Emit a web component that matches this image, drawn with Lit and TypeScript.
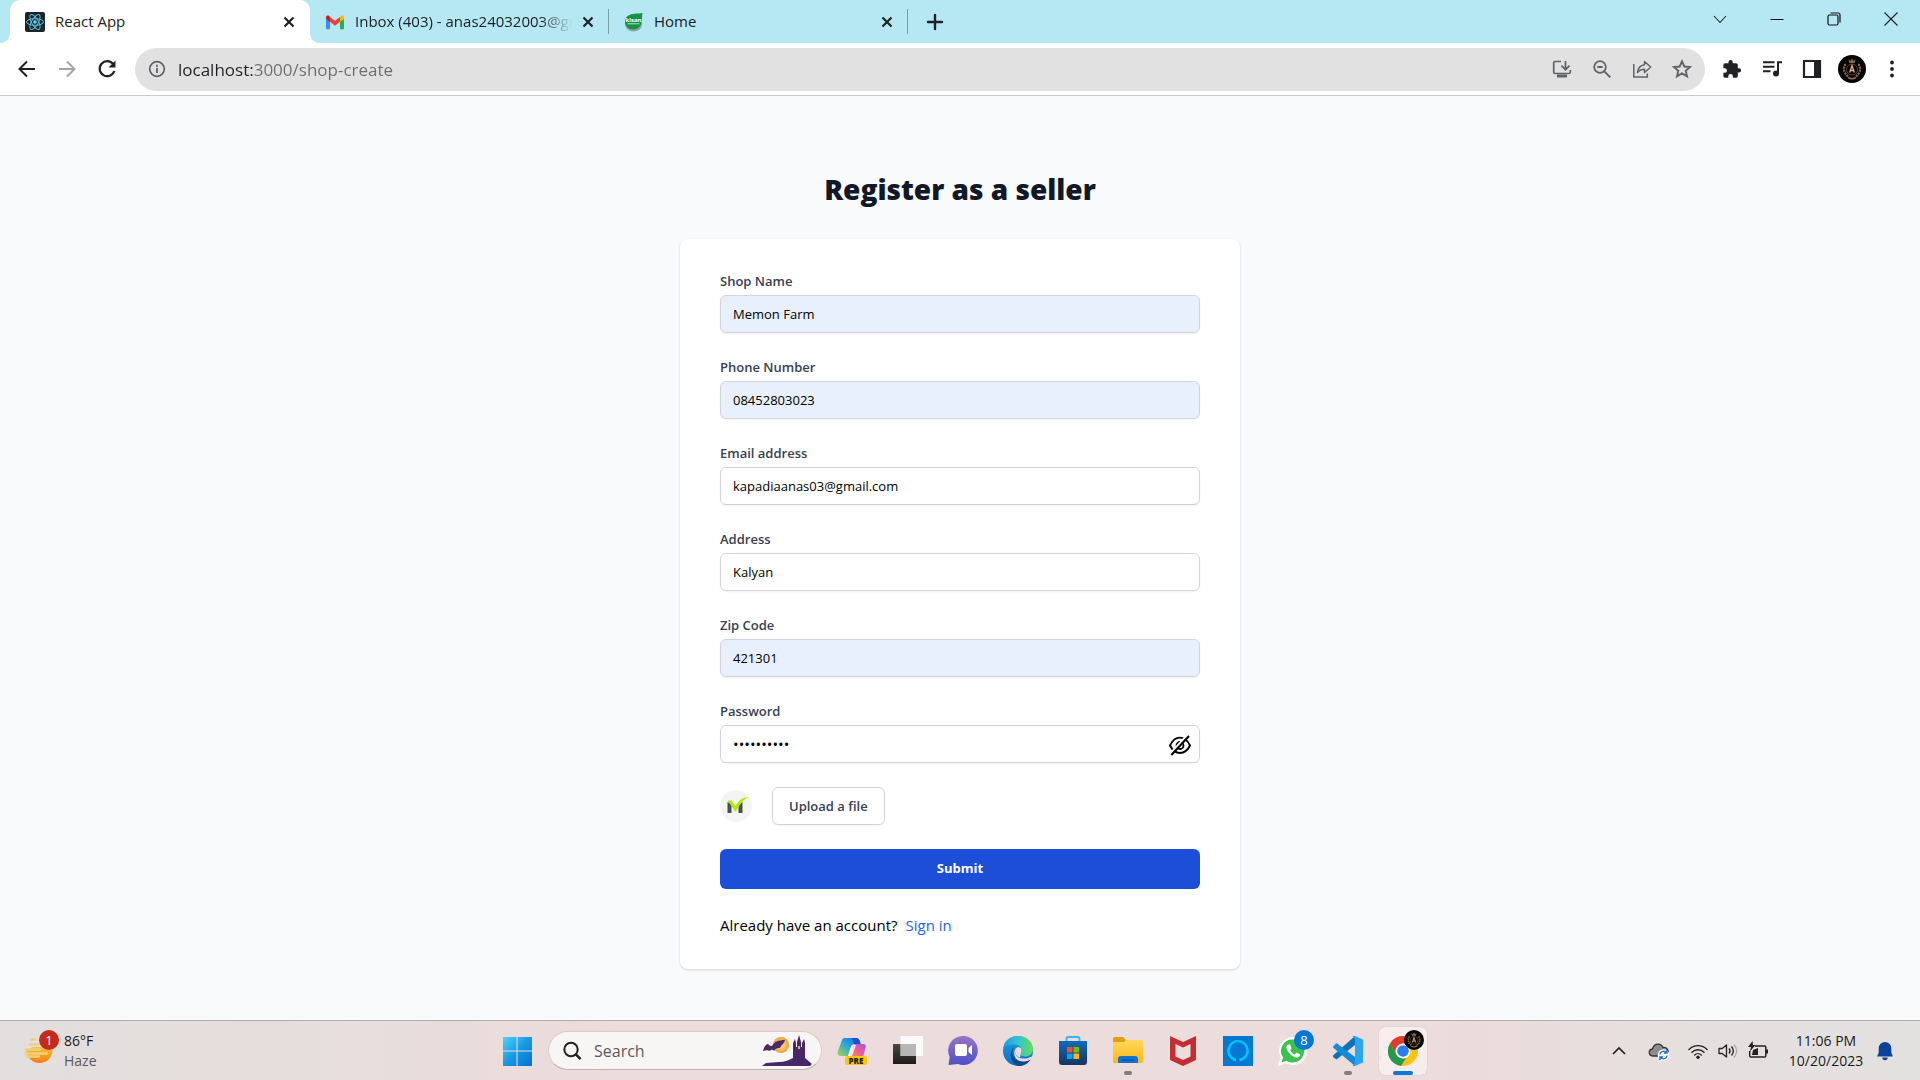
import { LitElement, html, css, svg, nothing } from "lit";
import { customElement, state } from "lit/decorators.js";

const icon = (w: number, h: number, body: unknown, box = `0 0 ${w} ${h}`) =>
  html`<svg width=${w} height=${h} viewBox=${box} fill="none" aria-hidden="true">${body}</svg>`;

const closeIcon = icon(12, 12, svg`<path d="M1.5 1.5l9 9M10.5 1.5l-9 9" stroke="#202124" stroke-width="2.2"/>`);

const crest = (size: number) =>
  icon(size, size, svg`
    <circle cx="14" cy="14" r="14" fill="#050404"/>
    <path d="M10.5 4l2 2L14 3.500 15.500 6l2-2-.8 4h-5.400z" fill="#8a6746"/>
    <circle cx="14" cy="14.500" r="5.500" stroke="#5c4630" stroke-width="1"/>
    <path d="M7.500 9c-3 5-1.500 10 3.500 13M20.500 9c3 5 1.500 10-3.500 13" stroke="#8f6d4c" stroke-width="2.200" stroke-dasharray="2 1"/>
    <path d="M10 22.500c2.500 1.500 5.500 1.500 8 0" stroke="#8f6d4c" stroke-width="1.500"/>
    <path d="M11.700 17.500l2.300-7 2.300 7M12.700 15.500h2.600" stroke="#d9b48a" stroke-width="1.300"/>`,
    "0 0 28 28");

const reactIcon = icon(20, 20, svg`
  <rect width="20" height="20" rx="2" fill="#20232a"/>
  <g stroke="#53c1de" stroke-width="1"><ellipse cx="10" cy="10" rx="8.500" ry="3.300"/>
  <ellipse cx="10" cy="10" rx="8.500" ry="3.300" transform="rotate(60 10 10)"/>
  <ellipse cx="10" cy="10" rx="8.500" ry="3.300" transform="rotate(120 10 10)"/></g>
  <circle cx="10" cy="10" r="1.800" fill="#61dafb"/>`);

const gmailIcon = icon(20, 20, svg`
  <path d="M1 6v10c0 .8.500 1.300 1.300 1.300H5V9z" fill="#4285f4"/>
  <path d="M15 9v8.300h2.700c.8 0 1.300-.5 1.300-1.300V6z" fill="#34a853"/>
  <path d="M15 5.500V10l4-3V5.500C19 3.600 17 3.200 15.800 4z" fill="#fbbc04"/>
  <path d="M5 5l5 3.800L15 5v4.800l-5 3.900-5-3.900z" fill="#ea4335"/>
  <path d="M1 5.500V7l4 3V5l-.8-1C3 3.200 1 3.600 1 5.500z" fill="#c5221f"/>`);

const kisanIcon = icon(20, 20, svg`
  <path d="M1 11c0 4.500 3 8.500 8.500 8.500 6 0 9-4 8.500-9z" fill="#8fa39d"/>
  <path d="M18.500 1c-.5 2-.3 4.500-.7 8-.6 5-4 8.500-8.500 8.500S1 14 1 10c0-6 5-8 9.500-8.300C14 1.500 16 1.400 18.500 1z" fill="#159347"/>
  <text x="9.500" y="10" text-anchor="middle" font-size="6" font-weight="700" fill="#fff" font-family="Open Sans, sans-serif">kisan</text>
  <path d="M3.500 11.800h12" stroke="#b9dfc8" stroke-width="1"/>`);

const backIcon = icon(20, 20, svg`<path d="M18 10H3M10 2.500L2.500 10l7.500 7.500" stroke="#202124" stroke-width="2"/>`);
const forwardIcon = icon(20, 20, svg`<path d="M2 10h15M10 2.500l7.500 7.500-7.500 7.500" stroke="#a3a3a3" stroke-width="2"/>`);
const reloadIcon = icon(20, 20, svg`
  <path d="M16.200 5.200A7.500 7.500 0 1 0 17.300 12" stroke="#202124" stroke-width="2.200"/>
  <path d="M18.500 1.500v7h-7z" fill="#202124"/>`);
const infoIcon = icon(18, 18, svg`
  <circle cx="9" cy="9" r="7.300" stroke="#5f6368" stroke-width="1.700"/>
  <path d="M9 8v5M9 4.800v1.900" stroke="#5f6368" stroke-width="1.800"/>`);

const installIcon = icon(20, 20, svg`
  <path d="M9 2.500H3c-.8 0-1.300.5-1.300 1.300v9.400c0 .8.500 1.300 1.300 1.300h14c.8 0 1.300-.5 1.300-1.300V11" stroke="#5f6368" stroke-width="1.700"/>
  <path d="M5 15.500h10v3H5z" fill="#5f6368"/><path d="M13.500 2v8M9.500 6.700l4 4 4-4" stroke="#5f6368" stroke-width="1.700"/>`);
const zoomOutIcon = icon(20, 20, svg`
  <circle cx="8" cy="8" r="5.800" stroke="#5f6368" stroke-width="1.800"/>
  <path d="M12.300 12.300l6 6M5.300 8h5.400" stroke="#5f6368" stroke-width="1.900"/>`);
const shareIcon = icon(20, 20, svg`
  <path d="M1.800 5v13h13.500v-3.500" stroke="#5f6368" stroke-width="1.500"/>
  <path d="M12.500 2.500l6.200 5.500-6.200 5.500v-3.200c-3.300 0-5.300.9-7 3.200.4-3.800 2.300-7 7-7.700z" stroke="#5f6368" stroke-width="1.500" stroke-linejoin="round"/>`);
const starIcon = icon(20, 20, svg`
  <path d="M10 2.300l2.300 5.200 5.700.5-4.300 3.800 1.300 5.600-5-3-5 3 1.300-5.600L2 8l5.700-.5z" stroke="#5f6368" stroke-width="1.900"/>`);

const puzzleIcon = icon(20, 20, svg`
  <path d="M17 9.300h-1.200V6c0-1-.8-1.700-1.700-1.700h-3.400V3a2.100 2.100 0 0 0-4.200 0v1.300H3.100C2.100 4.300 1.400 5 1.400 6v3.200h1.300a2.300 2.300 0 0 1 0 4.600H1.400V17c0 1 .7 1.700 1.700 1.700h3.200v-1.300a2.300 2.300 0 0 1 4.600 0v1.300h3.200c1 0 1.700-.7 1.700-1.700v-3.500H17a2.100 2.100 0 0 0 0-4.200z" fill="#202124"/>`);
const musicIcon = icon(20, 20, svg`
  <path d="M1 3.200h11.500M1 7.700h11.500M1 12.200h7.500" stroke="#202124" stroke-width="1.900"/>
  <path d="M16 14V3.200h4" stroke="#202124" stroke-width="2"/><circle cx="14" cy="14.500" r="3" fill="#202124"/>`);
const panelIcon = icon(20, 20, svg`
  <path d="M2 2h16v16H2z" stroke="#202124" stroke-width="2.200"/><path d="M12 2h6v16h-6z" fill="#202124"/>`);
const dotsIcon = icon(20, 20, svg`<g fill="#202124"><circle cx="10" cy="3.500" r="1.900"/><circle cx="10" cy="10" r="1.900"/><circle cx="10" cy="16.500" r="1.900"/></g>`);

const eyeOffIcon = icon(24, 24, svg`
  <path d="M2 12.500c5-10.500 15-10.500 20 0-5 10-15 10-20 0z" stroke="#000" stroke-width="1.900"/>
  <circle cx="12" cy="12.500" r="3.500" stroke="#000" stroke-width="1.800"/>
  <path d="M2 21L20 1" stroke="#fff" stroke-width="2"/>
  <path d="M3.300 22L21 3" stroke="#000" stroke-width="2"/>`);
const shopLogo = icon(32, 32, svg`
  <circle cx="16" cy="16" r="16" fill="#f4f4f4"/>
  <path d="M7.500 12l4 2v9h-4zM18.500 15l4-3v11h-4z" fill="#4b4b50"/>
  <path d="M7.500 10.500h4l4 5.500c3-5.500 7-9 13.500-9-6 2.500-9 7.500-13.500 15z" fill="#b0e80c"/>`);

const weatherIcon = icon(30, 30, svg`
  <defs><linearGradient id="sun" x1="0" y1="0" x2="0" y2="1"><stop offset="0" stop-color="#fbc02d"/><stop offset="1" stop-color="#f57c13"/></linearGradient></defs>
  <path d="M2.500 14a13 13 0 0 0 26 0l-8-3H9z" fill="url(#sun)"/>
  <path d="M7 3.500h4M6 8.500h8M2 13.500h14M1 17.500h22M3 20.500h12" stroke="#f1cf7d" stroke-width="2.600" stroke-linecap="round"/>`);
const startIcon = icon(30, 30, svg`
  <defs><linearGradient id="win" x1="0" y1="0" x2="1" y2="1"><stop offset="0" stop-color="#4cd3fc"/><stop offset=".5" stop-color="#1798e2"/><stop offset="1" stop-color="#0672d0"/></linearGradient></defs>
  <path d="M1 1h13.500v13.500H1zM15.500 1H30v13.500H15.500zM1 15.500h13.500V30H1zM15.500 15.500H30V30H15.500z" fill="url(#win)"/>`);
const searchIcon = icon(20, 20, svg`
  <circle cx="9" cy="8.500" r="6.700" stroke="#222" stroke-width="2"/><path d="M13.600 13.200l5 5" stroke="#222" stroke-width="2.600"/>`);
const castleIcon = icon(52, 34, svg`
  <defs><radialGradient id="moon"><stop offset="0" stop-color="#ffe48d"/><stop offset="1" stop-color="#e9a13b"/></radialGradient></defs>
  <circle cx="20" cy="11" r="8" fill="url(#moon)"/>
  <path d="M2 17c1-4 3-7 5-7 1 1 2 2 4 2 2-4 6-6 13-6-1 4-4 5-5 8-3 0-4 0-6 3-2-2-3-1-4 0-2-1-4-1-7 0z" fill="#4a2b66"/>
  <path d="M32 24V9l2-4 1 4v4h1V8l2-7 2 7v5h1V9l2-4 1 4v15l7 6-2 2H1l4-3 13-1c6 0 10-2 14-4z" fill="#46286a"/>
  <path d="M37 12h2v3h-2z" fill="#e6a85a"/>`);

const copilotIcon = icon(32, 32, svg`
  <defs><linearGradient id="cpA" x1="1" y1="0" x2="0" y2="1"><stop offset="0" stop-color="#1c5fe0"/><stop offset=".5" stop-color="#2aa7dd"/><stop offset="1" stop-color="#a0d84a"/></linearGradient>
  <linearGradient id="cpB" x1="1" y1="0" x2="0" y2="1"><stop offset="0" stop-color="#a253e8"/><stop offset=".5" stop-color="#ed5b9b"/><stop offset="1" stop-color="#ff9a3d"/></linearGradient></defs>
  <path d="M8 3h11c3 0 4 3 4.500 6H19c-4 0-5 2-6 5l-2 7H4c-3 0-4-2-3-5L5 5c.5-1.500 1.500-2 3-2z" fill="url(#cpA)"/>
  <path d="M15 3h4c3 0 4 3 4.500 6H17z" fill="#1d4ed0"/>
  <path d="M19 9h7c3 0 3 2 2.500 4L26 22H12l3-10c.7-2 2-3 4-3z" fill="url(#cpB)"/>
  <path d="M15 10h4l-4 11h-4z" fill="#fff" opacity=".8"/>
  <rect x="8" y="21" width="22" height="9" rx="2" fill="#ffc800"/>
  <text x="19" y="29" font-size="8" font-weight="800" text-anchor="middle" fill="#222" font-family="Open Sans, sans-serif">PRE</text>`);
const taskViewIcon = icon(32, 32, svg`
  <defs><linearGradient id="tv" x1="0" y1="0" x2="0" y2="1"><stop offset="0" stop-color="#4a4845"/><stop offset="1" stop-color="#1d1c1b"/></linearGradient></defs>
  <path d="M1 9h23v20H1z" fill="url(#tv)"/><path d="M8.500 1H31v20H8.500z" fill="#fff" opacity=".82"/><path d="M8.500 9H24v12H8.500z" fill="#aaa" opacity=".75"/>`);
const chatIcon = icon(32, 32, svg`
  <defs><linearGradient id="chat" x1="0" y1="0" x2="0" y2="1"><stop offset="0" stop-color="#9a74c4"/><stop offset="1" stop-color="#4d50c8"/></linearGradient></defs>
  <path d="M16 1a14.500 14.500 0 1 1-5 28L1.500 30l1.200-8A14.500 14.500 0 0 1 16 1z" fill="url(#chat)"/>
  <rect x="8" y="9" width="12" height="12" rx="2" fill="#fff"/><path d="M21.500 13l3.500-3v10l-3.500-3z" fill="#fff"/>`);
const edgeIcon = icon(32, 32, svg`
  <defs><linearGradient id="edA" x1="0" y1="0" x2="1" y2="0"><stop offset="0" stop-color="#2497dc"/><stop offset=".5" stop-color="#30c4d6"/><stop offset="1" stop-color="#6bdb54"/></linearGradient>
  <linearGradient id="edB" x1="0" y1="0" x2="0" y2="1"><stop offset="0" stop-color="#1b9de2"/><stop offset="1" stop-color="#0c6fc4"/></linearGradient></defs>
  <circle cx="16" cy="16" r="15" fill="url(#edB)"/>
  <path d="M1 14C2 6 8 1 16 1c9 0 15 6 15 13 0 5-4 7.500-8 7.500-3 0-5-1-5-2.500 0-1 1.500-1.500 1.500-4 0-3-3-5.500-7-5.500C7 9.500 2 11 1 14z" fill="url(#edA)"/>
  <path d="M12 12c-3 6-1 12 5 14 5 1.500 9 0 12-2-3 5-8 7.500-13 7-7-2-10-13-4-19z" fill="#114a8b"/>
  <path d="M13 14c-1 5 2 9 8 9.500 3.500.3 6-.5 8.500-2L32 25l-3-.5c-4 2-7 2.500-11 1.500-5-1.500-7-7-5-12z" fill="#ecdcdc"/>
  <path d="M19.500 15c0-2-2-3-3.500-3-3 1-4 4-2 7.500 1 1.500 2.500 2.500 4 3z" fill="#ecdcdc"/>`);
const storeIcon = icon(32, 32, svg`
  <defs><linearGradient id="store" x1="0" y1="0" x2="0" y2="1"><stop offset="0" stop-color="#0e6cbd"/><stop offset="1" stop-color="#183463"/></linearGradient></defs>
  <path d="M9.500 8V4c0-1 .5-2 2-2h9c1.500 0 2 1 2 2v4" stroke="#35b8ef" stroke-width="2"/>
  <path d="M2 6h28v21c0 2-1 3-3 3H5c-2 0-3-1-3-3z" fill="url(#store)"/>
  <path d="M10 12h5.500v5.500H10z" fill="#f25022"/><path d="M16.500 12H22v5.500h-5.500z" fill="#7fba00"/><path d="M10 18.500h5.500V24H10z" fill="#00a4ef"/><path d="M16.500 18.500H22V24h-5.500z" fill="#ffb900"/>`);
const explorerIcon = icon(32, 32, svg`
  <defs><linearGradient id="fold" x1="0" y1="0" x2="0" y2="1"><stop offset="0" stop-color="#ffd75e"/><stop offset="1" stop-color="#fbb917"/></linearGradient></defs>
  <path d="M1 4c0-1 .7-2 2-2h8l3 3h15v4H1z" fill="#e0a00e"/><path d="M1 7h11l2-2h15c1.500 0 2 .7 2 2v19c0 1.500-.7 2-2 2H1z" fill="url(#fold)"/>
  <path d="M6 28v-4c0-2 1-3 3-3h14c2 0 3 1 3 3v4z" fill="#1273cf"/><path d="M10 25h12" stroke="#0b4f9c" stroke-width="1.400"/>`);
const mcafeeIcon = icon(32, 32, svg`
  <path d="M3 1l13 6 13-6v24l-13 6-13-6zM8.500 9v12.500L16 25l7.500-3.500V9L16 12.500z" fill="#c22e34" fill-rule="evenodd"/>`);
const alexaIcon = icon(32, 32, svg`
  <path d="M1 1h30v30H1z" fill="#0578d4"/><path d="M14 26.500a10.800 10.800 0 1 1 4 0c-.5-2-1-2.500-2-3-1 .5-1.500 1-2 3z" fill="#04c4fa"/><circle cx="16" cy="15.500" r="8.300" fill="#0578d4"/><path d="M14 22h3v5l-3-1z" fill="#0578d4"/>`);
const whatsappIcon = icon(32, 32, svg`
  <path d="M16 2A14 14 0 1 1 9 28L1 31l2.500-9A14 14 0 0 1 16 2z" fill="#fff"/>
  <path d="M16 4.500A11.500 11.500 0 1 1 9.500 25.700L4.500 27.500l1.500-5A11.500 11.500 0 0 1 16 4.500z" fill="#3cc04f"/>
  <path d="M11 9.500c-2 1-2 3.500-.8 5.500 2 4 5 6.500 8.800 7.500 2 .4 4-.8 4.200-3l-3.700-2-1.800 2c-2.200-1-3.500-2.500-4.500-4.500l1.400-1.800L13 9.500z" fill="#fff"/>`);
const codeIcon = icon(32, 32, svg`
  <path d="M23 1v9L4.500 24.500 1 22v-1.500z" fill="#0b73bb"/><path d="M1 11.500L4.500 8 23 22v9L1 12.500z" fill="#158ad6"/>
  <path d="M23 1l8 3.500v23L23 31c-1 .5-2 0-2.500-.5L23 28V4l-2.500-2.500C21 .8 22 .5 23 1z" fill="#2aa6f2"/>`);
const chromeIcon = icon(32, 32, svg`
  <circle cx="16" cy="16" r="15" fill="#fbc116"/>
  <path d="M3 8.500A15 15 0 0 1 29 8.500H16l-6.500 11z" fill="#e33b2e"/>
  <path d="M3 8.500l6.500 11.300c2 3 6 4 9.500 3.200L14 31A15 15 0 0 1 3 8.500z" fill="#219a4c"/>
  <circle cx="16" cy="16" r="7.500" fill="#fff"/><circle cx="16" cy="16" r="5.800" fill="#2f7bee"/>`);

const cloudIcon = icon(22, 20, svg`
  <path d="M5.500 15C0 15 0 8.500 4.500 8 6 2 13 1.500 15 6.500c4-.5 6 3 5 6L14 15z" fill="#8d8d8d" stroke="#333" stroke-width="1.300"/>
  <circle cx="15.500" cy="14" r="5.800" fill="#fff"/>
  <path d="M11.800 13.500a3.800 3.800 0 0 1 6.800-1.800M19.200 14.500a3.800 3.800 0 0 1-6.800 1.800M19 9v3h-3M12 19v-3h3" stroke="#1470c8" stroke-width="1.400"/>`);
const wifiIcon = icon(20, 20, svg`
  <path d="M1 8.500a12.500 12.500 0 0 1 18 0M4 11.200a8.500 8.500 0 0 1 12 0M6.700 14a4.700 4.700 0 0 1 6.600 0" stroke="#222" stroke-width="1.400" stroke-linecap="round"/><circle cx="10" cy="16.200" r="1.700" fill="#222"/>`);
const volumeIcon = icon(20, 20, svg`
  <path d="M1 7.500h3.200L8.500 4v12l-4.300-3.500H1z" stroke="#222" stroke-width="1.300" stroke-linejoin="round"/>
  <path d="M11 7.500c1.300 1.500 1.300 3.500 0 5M13.500 5.500c2.300 2.800 2.300 6.200 0 9" stroke="#222" stroke-width="1.300"/><path d="M16 3.500c3.300 4 3.300 9 0 13" stroke="#aaa" stroke-width="1.200"/>`);
const batteryIcon = icon(20, 20, svg`
  <path d="M7 5h9.500c.8 0 1.300.5 1.300 1.300v8.400c0 .8-.5 1.300-1.300 1.300H3c-.8 0-1.300-.5-1.300-1.300V10" stroke="#222" stroke-width="1.500"/>
  <path d="M4 14l1-5 5-2v7zM18 8.500h2v4h-2z" fill="#222"/><path d="M4.500 0L0 6h3L2 10.500 7.500 4H5z" fill="#222"/>`);
const bellIcon = icon(18, 20, svg`
  <path d="M9 1a6.300 6.300 0 0 1 6.300 6.300v4.500l1.700 3.700H1l1.700-3.700V7.300A6.300 6.300 0 0 1 9 1zM6.300 16.500h5.400a2.700 2.700 0 0 1-5.400 0z" fill="#0b429c"/>`);

const base = css`
  *, *::before, *::after { box-sizing: border-box; }
  button, input { font: inherit; color: inherit; margin: 0; }
  button { border: 0; padding: 0; background: none; display: grid; place-items: center; cursor: pointer; }
  svg { display: block; }
`;

@customElement("browser-chrome")
class BrowserChrome extends LitElement {
  static styles = [base, css`
    :host { display: block; background: #fff; border-bottom: 1px solid #c8cacd; }
    .strip { display: flex; height: 43px; background: #b5e8f3; padding-left: 10px; align-items: center; }
    .tab { display: flex; align-items: center; gap: 10px; width: 299px; height: 100%; padding: 0 15px 0 15px; font-size: 15px; color: #202124; position: relative; }
    .tab.active { width: 300px; background: #fff; border-radius: 10px 10px 0 0; }
    .tab.active::before, .tab.active::after { content: ""; position: absolute; bottom: 0; width: 10px; height: 10px; }
    .tab.active::before { left: -10px; background: radial-gradient(circle at 0 0, transparent 10px, #fff 10px); }
    .tab.active::after { right: -10px; background: radial-gradient(circle at 100% 0, transparent 10px, #fff 10px); }
    .tab:not(.active)::after { content: ""; position: absolute; right: 0; top: 9px; width: 1px; height: 25px; background: #7b9da5; }
    .tab svg { flex: none; }
    .title { flex: 1; min-width: 0; overflow: hidden; white-space: nowrap; line-height: 24px; padding-bottom: 2px; }
    .fade { mask-image: linear-gradient(90deg, #000 calc(100% - 32px), transparent); }
    .tab .close { width: 12px; height: 12px; }
    .new { margin-left: 18px; }
    .window { display: flex; margin-left: auto; height: 100%; padding-right: 1px; }
    .window button { width: 57px; height: 37px; }
    .bar { display: flex; align-items: center; height: 52px; padding: 0 18px 0 7px; }
    .nav { display: flex; }
    .nav button { width: 40px; height: 40px; }
    .omni { display: flex; align-items: center; flex: 1; height: 43px; margin-left: 8px; padding: 0 13px; border-radius: 22px; background: #e1e1e1; }
    .omni input { flex: 1; min-width: 0; border: 0; outline: 0; height: 40px; padding: 0; margin-left: 12px; font-size: 17px;
      background: linear-gradient(90deg, #202124 75px, #6b6e71 75px); background-clip: text; -webkit-background-clip: text; -webkit-text-fill-color: transparent; }
    .actions { display: flex; gap: 20px; }
    .tools { display: flex; align-items: center; gap: 20px; padding-left: 17px; }
    .tools .profile { margin: 0 -4px; }
  `];
  render() {
    const tab = (ico: unknown, title: string, active = false, fade = false) => html`
      <div class="tab ${active ? "active" : ""}" role="tab" aria-selected=${active}>
        ${ico}<span class="title ${fade ? "fade" : ""}">${title}</span>
        <button class="close" aria-label="Close tab">${closeIcon}</button>
      </div>`;
    const b = (label: string, ico: unknown, cls = "") => html`<button class=${cls} aria-label=${label}>${ico}</button>`;
    return html`
      <div class="strip" role="tablist">
        ${tab(reactIcon, "React App", true)}
        ${tab(gmailIcon, "Inbox (403) - anas24032003@gm", false, true)}
        ${tab(kisanIcon, "Home")}
        ${b("New tab", icon(18, 18, svg`<path d="M9 2v14M2 9h14" stroke="#202124" stroke-width="2.400" stroke-linecap="round"/>`), "new")}
        <div class="window">
          ${b("Search tabs", icon(14, 14, svg`<path d="M1 4l6 6.500L13 4" stroke="#222" stroke-width="1.100"/>`))}
          ${b("Minimize", icon(14, 14, svg`<path d="M.5 7.500h13" stroke="#111"/>`))}
          ${b("Restore", icon(14, 14, svg`<rect x="1" y="3" width="10" height="10" rx="1.500" stroke="#111" stroke-width="1.200"/><path d="M3.500 1h7.500c1.500 0 2 .7 2 2v7.500" stroke="#111" stroke-width="1.200"/>`))}
          ${b("Close", icon(14, 14, svg`<path d="M.5.500l13 13M13.500.500l-13 13" stroke="#222" stroke-width="1.100"/>`))}
        </div>
      </div>
      <div class="bar">
        <div class="nav">${b("Back", backIcon)}${b("Forward", forwardIcon)}${b("Reload", reloadIcon)}</div>
        <div class="omni">
          ${infoIcon}
          <input aria-label="Address" .value=${"localhost:3000/shop-create"}>
          <div class="actions">${b("Install", installIcon)}${b("Zoom", zoomOutIcon)}${b("Share", shareIcon)}${b("Bookmark", starIcon)}</div>
        </div>
        <div class="tools">${b("Extensions", puzzleIcon)}${b("Media", musicIcon)}${b("Side panel", panelIcon)}${b("Profile", crest(28), "profile")}${b("Menu", dotsIcon)}</div>
      </div>`;
  }
}

interface Field { id: string; label: string; type: string; value: string; filled?: boolean }

const fields: Field[] = [
  { id: "shop", label: "Shop Name", type: "text", value: "Memon Farm", filled: true },
  { id: "phone", label: "Phone Number", type: "tel", value: "08452803023", filled: true },
  { id: "email", label: "Email address", type: "email", value: "kapadiaanas03@gmail.com" },
  { id: "address", label: "Address", type: "text", value: "Kalyan" },
  { id: "zip", label: "Zip Code", type: "text", value: "421301", filled: true },
  { id: "password", label: "Password", type: "password", value: "farmseller" },
];

@customElement("seller-form")
class SellerForm extends LitElement {
  @state() private reveal = false;
  static styles = [base, css`
    :host { display: flex; flex-direction: column; align-items: center; justify-content: center; flex: 1; background: #f9fafb; padding: 48px 16px; }
    h1 { margin: 24px 0 32px; font-size: 28px; line-height: 36px; font-weight: 800; color: #111827; }
    form { display: flex; flex-direction: column; gap: 24px; width: 100%; max-width: 560px; padding: 32px 40px; background: #fff; border-radius: 8px; box-shadow: 0 1px 3px rgb(0 0 0 / .1), 0 1px 2px rgb(0 0 0 / .06); }
    label { font-size: 13px; line-height: 20px; font-weight: 600; color: #374151; }
    .field { display: grid; gap: 4px; }
    .box { position: relative; }
    .box input { display: block; width: 100%; height: 38px; padding: 8px 12px; border: 1px solid #d1d5db; border-radius: 6px; background: #fff; color: #000; font-size: 13px; line-height: 20px; box-shadow: 0 1px 2px rgb(0 0 0 / .05); outline: 0; }
    .box input.filled { background: #e8f0fe; }
    .box input[type="password"] { font-size: 15px; }
    .eye { position: absolute; right: 8px; top: 8px; }
    .upload { display: flex; align-items: center; gap: 20px; }
    .file { padding: 8px 16px; border: 1px solid #d1d5db; border-radius: 6px; box-shadow: 0 1px 2px rgb(0 0 0 / .05); cursor: pointer; }
    .file input { position: absolute; width: 1px; height: 1px; opacity: 0; }
    .submit { height: 40px; padding-bottom: 2px; border-radius: 6px; background: #1d4ed8; color: #fff; font-size: 13px; font-weight: 700; }
    p { display: flex; gap: 8px; margin: 0; font-size: 15px; line-height: 24px; color: #000; }
    a { color: #2563eb; text-decoration: none; }
  `];
  render() {
    return html`
      <h1>Register as a seller</h1>
      <form @submit=${(e: Event) => e.preventDefault()}>
        ${fields.map((f) => html`
          <div class="field">
            <label for=${f.id}>${f.label}</label>
            <div class="box">
              <input id=${f.id} class=${f.filled ? "filled" : ""} type=${f.type === "password" && this.reveal ? "text" : f.type} .value=${f.value}>
              ${f.type === "password"
                ? html`<button class="eye" type="button" aria-label="Show password" @click=${() => (this.reveal = !this.reveal)}>${eyeOffIcon}</button>`
                : nothing}
            </div>
          </div>`)}
        <div class="upload">${shopLogo}<label class="file">Upload a file<input type="file"></label></div>
        <button class="submit" type="submit">Submit</button>
        <p><span>Already have an account?</span><a href="#login">Sign in</a></p>
      </form>`;
  }
}

@customElement("task-bar")
class TaskBar extends LitElement {
  static styles = [base, css`
    :host { display: grid; grid-template-columns: 1fr auto 1fr; align-items: center; height: 59px; border-top: 1px solid #b3abab; background: linear-gradient(90deg, #e3dfdf 0%, #e7dedd 18%, #ecdcdb 32%, #ecdcdb 75%, #e4e0df 90%, #e3e1e0 100%); color: #1b1b1b; font-size: 14px; line-height: 20px; }
    .weather { display: flex; align-items: center; gap: 10px; padding-left: 24px; justify-self: start; text-align: left; }
    .muted { color: #5b5959; }
    .sunbox, .app { position: relative; }
    .badge { position: absolute; display: grid; place-items: center; width: 20px; height: 20px; border-radius: 50%; color: #fff; font-size: 13px; line-height: 20px; }
    .red { background: #c42b1c; left: 15px; top: -6px; }
    .blue { background: #0078d4; right: 3px; top: 3px; }
    .crest { right: 3px; top: 3px; }
    .apps { display: flex; align-items: center; gap: 7px; }
    .app { width: 48px; height: 48px; border-radius: 6px; }
    .app.current { background: #f6edec; box-shadow: 0 0 1px #bbaead; }
    .app.open::after { content: ""; position: absolute; left: 20px; bottom: 0; width: 8px; height: 4px; border-radius: 2px; background: #857e7e; }
    .app.current::after { left: 14px; width: 20px; background: #0b78d4; }
    .search { display: flex; align-items: center; gap: 12px; width: 274px; height: 39px; padding: 0 8px 0 13px; border-radius: 20px; background: #f8f5f5; border: 1px solid #d9cbcb; border-bottom-color: #bbb0b0; }
    .search input { flex: 1; min-width: 0; border: 0; outline: 0; background: none; padding: 0; font-size: 16px; }
    .search input::placeholder { color: #5d5b5b; opacity: 1; }
    .tray { display: flex; align-items: center; gap: 10px; justify-self: end; padding-right: 26px; }
    .clock { display: block; text-align: right; margin-left: 8px; min-width: 80px; }
    .clock span, .weather .text span { display: block; }
    .chev { margin-right: 12px; }
    .cloud { margin-right: 8px; }
  `];
  render() {
    const app = (label: string, ico: unknown, cls = "", extra: unknown = nothing) =>
      html`<button class="app ${cls}" aria-label=${label}>${ico}${extra}</button>`;
    return html`
      <button class="weather">
        <span class="sunbox">${weatherIcon}<span class="badge red">1</span></span>
        <span class="text"><span>86°F</span><span class="muted">Haze</span></span>
      </button>
      <div class="apps">
        ${app("Start", startIcon)}
        <label class="search">${searchIcon}<input aria-label="Search" placeholder="Search">${castleIcon}</label>
        ${app("Copilot", copilotIcon)}
        ${app("Task view", taskViewIcon)}
        ${app("Chat", chatIcon)}
        ${app("Edge", edgeIcon)}
        ${app("Store", storeIcon)}
        ${app("File Explorer", explorerIcon, "open")}
        ${app("McAfee", mcafeeIcon)}
        ${app("Alexa", alexaIcon)}
        ${app("WhatsApp", whatsappIcon, "", html`<span class="badge blue">8</span>`)}
        ${app("Visual Studio Code", codeIcon, "open")}
        ${app("Chrome", chromeIcon, "open current", html`<span class="badge crest">${crest(20)}</span>`)}
      </div>
      <div class="tray">
        <button class="chev" aria-label="Hidden icons">${icon(14, 14, svg`<path d="M1 10l6-6 6 6" stroke="#222" stroke-width="1.700"/>`)}</button>
        <button class="cloud" aria-label="OneDrive">${cloudIcon}</button>
        <button aria-label="Wi-Fi">${wifiIcon}</button>
        <button aria-label="Volume">${volumeIcon}</button>
        <button aria-label="Battery">${batteryIcon}</button>
        <button class="clock"><span>11:06 PM</span><span>10/20/2023</span></button>
        <button aria-label="Notifications">${bellIcon}</button>
      </div>`;
  }
}

@customElement("app-root")
class AppRoot extends LitElement {
  static styles = css`
    :host { display: flex; flex-direction: column; min-height: 100vh; font-family: "Segoe UI", "Open Sans", "Noto Sans", sans-serif; }
  `;
  render() {
    return html`<browser-chrome></browser-chrome><seller-form></seller-form><task-bar></task-bar>`;
  }
}
